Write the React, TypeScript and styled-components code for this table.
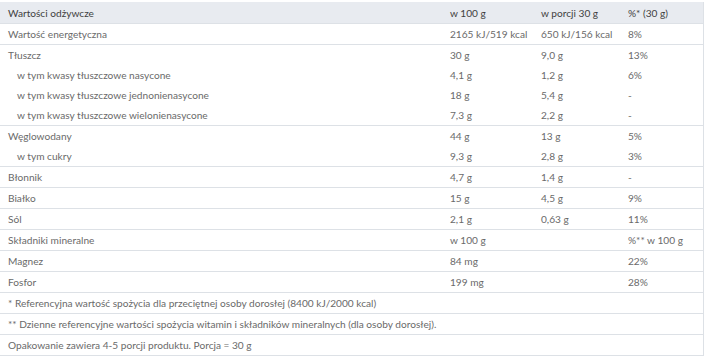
import React from "react";
import styled, { createGlobalStyle } from "styled-components";

const Global = createGlobalStyle`
  html, body { margin: 0; padding: 0; background: #ffffff; }
  body { font-family: Lato, "Open Sans", sans-serif; }
`;

const Table = styled.div`
  width: 703px;
  margin-top: 2px;
  border-right: 1px solid #dde1e6;
  font-family: Lato, sans-serif;
  font-size: 10.15px;
  color: #6a6a6a;
`;

const Row = styled.div<{ $head?: boolean }>`
  display: grid;
  grid-template-columns: 442px 91px 87px 1fr;
  height: ${(p) => (p.$head ? 21 : 20)}px;
  align-items: center;
  background: ${(p) => (p.$head ? "#e8ebf0" : "transparent")};
  color: ${(p) => (p.$head ? "#3f3f3f" : "inherit")};
  border-bottom: ${(p) => (p.$head ? "1px solid #dde1e6" : "none")};
`;

const Cell = styled.div<{ $indent?: boolean }>`
  padding-left: ${(p) => (p.$indent ? 17 : 8)}px;
  white-space: nowrap;
`;

const Group = styled.div`
  border-bottom: 1px solid #dde1e6;
`;

const Note = styled.div`
  height: 20px;
  display: flex;
  align-items: center;
  padding-left: 8px;
  white-space: nowrap;
`;

type R = [string, string, string, string, boolean?];

const groups: R[][] = [
  [["Wartość energetyczna", "2165 kJ/519 kcal", "650 kJ/156 kcal", "8%"]],
  [
    ["Tłuszcz", "30 g", "9,0 g", "13%"],
    ["w tym kwasy tłuszczowe nasycone", "4,1 g", "1,2 g", "6%", true],
    ["w tym kwasy tłuszczowe jednonienasycone", "18 g", "5,4 g", "-", true],
    ["w tym kwasy tłuszczowe wielonienasycone", "7,3 g", "2,2 g", "-", true],
  ],
  [
    ["Węglowodany", "44 g", "13 g", "5%"],
    ["w tym cukry", "9,3 g", "2,8 g", "3%", true],
  ],
  [["Błonnik", "4,7 g", "1,4 g", "-"]],
  [["Białko", "15 g", "4,5 g", "9%"]],
  [["Sól", "2,1 g", "0,63 g", "11%"]],
  [["Składniki mineralne", "w 100 g", "", "%** w 100 g"]],
  [["Magnez", "84 mg", "", "22%"]],
  [["Fosfor", "199 mg", "", "28%"]],
];

const notes = [
  "* Referencyjna wartość spożycia dla przeciętnej osoby dorosłej (8400 kJ/2000 kcal)",
  "** Dzienne referencyjne wartości spożycia witamin i składników mineralnych (dla osoby dorosłej).",
  "Opakowanie zawiera 4-5 porcji produktu. Porcja = 30 g",
];

export default function App() {
  return (
    <>
      <Global />
      <Table>
        <Row $head>
          <Cell>Wartości odżywcze</Cell>
          <Cell>w 100 g</Cell>
          <Cell>w porcji 30 g</Cell>
          <Cell>%* (30 g)</Cell>
        </Row>
        {groups.map((g, gi) => (
          <Group key={gi}>
            {g.map((r, ri) => (
              <Row key={ri}>
                <Cell $indent={r[4]}>{r[0]}</Cell>
                <Cell>{r[1]}</Cell>
                <Cell>{r[2]}</Cell>
                <Cell>{r[3]}</Cell>
              </Row>
            ))}
          </Group>
        ))}
        {notes.map((n, i) => (
          <Group key={"n" + i}>
            <Note>{n}</Note>
          </Group>
        ))}
      </Table>
    </>
  );
}
